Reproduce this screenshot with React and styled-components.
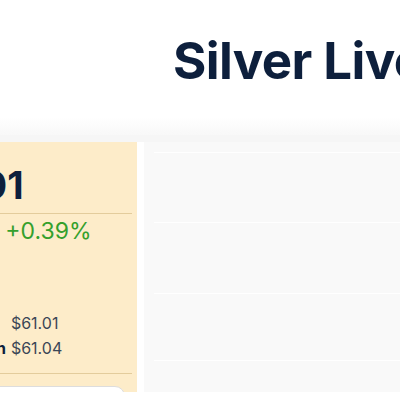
import React from "react";
import styled, { createGlobalStyle } from "styled-components";

const Global = createGlobalStyle`
  html, body { margin: 0; padding: 0; overflow: hidden; background: #fff; }
  body { font-family: Inter, "Noto Sans", Arial, sans-serif; }
  * { box-sizing: border-box; }
`;

const Page = styled.div`
  width: 400px;
  height: 400px;
  overflow: hidden;
  background: #fff;
`;

const Header = styled.header`
  height: 135px;
  padding: 35px 0 0 173px;
  background: linear-gradient(to bottom, #ffffff 117px, #f8f8f8 135px);
`;

const Title = styled.h1`
  margin: 0;
  font-size: 51px;
  line-height: 1;
  font-weight: 700;
  letter-spacing: -0.6px;
  color: #0d1f3c;
  white-space: nowrap;
`;

const Section = styled.section`
  background: #f6f6f6;
  padding-top: 7px;
`;

const Row = styled.div`
  display: flex;
  gap: 7px;
  height: 258px;
  padding-bottom: 8px;
  background: #fff;
`;

const Card = styled.div`
  flex: none;
  width: 257px;
  margin-left: -120px;
  height: 250px;
  overflow: hidden;
  background: #fdecc9;
  padding: 21px 5px 0 20px;
`;

const Price = styled.div`
  margin-left: 4px;
  font-size: 38px;
  line-height: 45.6px;
  font-weight: 700;
  color: #0d1f3c;
`;

const Divider = styled.div`
  height: 1px;
  background: #e3cc9c;
  margin-top: ${(p) => p.$top}px;
`;

const Change = styled.div`
  display: flex;
  gap: 41px;
  margin-top: 3px;
  font-size: 23px;
  line-height: 29px;
  color: #35a02c;
`;

const Stats = styled.div`
  display: grid;
  grid-template-columns: auto auto;
  justify-content: start;
  column-gap: 5px;
  margin: 65px 0 0 ${(p) => p.$left}px;
  font-size: 16px;
  line-height: 25px;
  color: #3b4656;
`;

const Label = styled.span`
  font-weight: 700;
  color: #0d1f3c;
`;

const Value = styled.span``;

const Box = styled.div`
  margin: 12px 7px 0 0;
  height: 60px;
  background: #fff;
  border: 1px solid #dddddd;
  border-radius: 10px;
`;

const Panel = styled.div`
  flex: 1;
  height: 250px;
  background: #f9f9f9;
  padding: 10px 0 0 10px;
`;

const Line = styled.div`
  height: ${(p) => p.$h}px;
  border-top: 1px solid #ffffff;
`;

export default function App() {
  return (
    <Page>
      <Global />
      <Header>
        <Title>Silver Live Price</Title>
      </Header>
      <Section>
        <Row>
          <Card>
            <Price>$61.01</Price>
            <Divider $top={4} />
            <Change>
              <span>+0.24</span>
              <span>+0.39%</span>
            </Change>
            <Stats $left={64}>
              <Label>Bid</Label>
              <Value>$61.01</Value>
              <Label>Open</Label>
              <Value>$61.04</Value>
            </Stats>
            <Divider $top={12} />
            <Box />
          </Card>
          <Panel>
            <Line $h={70} />
            <Line $h={71} />
            <Line $h={67} />
            <Line $h={30} />
          </Panel>
        </Row>
      </Section>
    </Page>
  );
}
